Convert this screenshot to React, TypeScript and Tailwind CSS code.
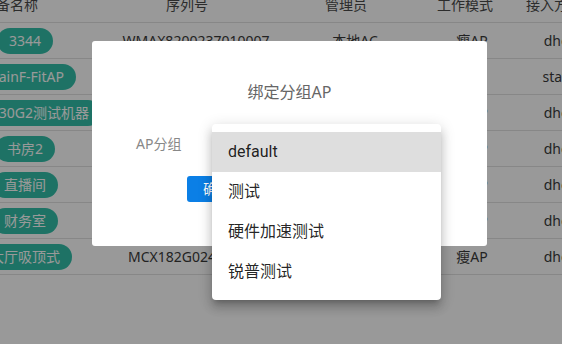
import React from "react";

const rows = [
  { name: "3344", sn: "WMAX8200237010007", admin: "本地AC", mode: "瘦AP", access: "dhcp" },
  { name: "MainF-FitAP", sn: "WMAX8200237010012", admin: "本地AC", mode: "-", access: "static" },
  { name: "WAX830G2测试机器", sn: "AX830G22100300218", admin: "本地AC", mode: "瘦AP", access: "dhcp" },
  { name: "书房2", sn: "MCX182G024000156", admin: "本地AC", mode: "瘦AP", access: "dhcp" },
  { name: "直播间", sn: "MCX182G024000172", admin: "本地AC", mode: "瘦AP", access: "dhcp" },
  { name: "财务室", sn: "MCX182G024000189", admin: "本地AC", mode: "瘦AP", access: "dhcp" },
  { name: "大厅吸顶式", sn: "MCX182G024000193", admin: "本地AC", mode: "瘦AP", access: "dhcp" },
];

const groups = ["default", "测试", "硬件加速测试", "锐普测试"];

const font = { fontFamily: '"Noto Sans", "Noto Sans CJK SC", sans-serif' };

export default function App() {
  return (
    <div className="relative w-[562px] h-[344px] overflow-hidden bg-white" style={font}>
      {/* ── device table (scrolled) ── */}
      <div className="-mt-[13px] -ml-[50px] w-[644px] text-[14px] text-[#3a3a3a]">
        <div className="flex h-[36px] items-center border-b border-[#e2e2e2] text-[#4a4a4a]">
          <div className="w-[150px] text-center pr-[30px]">设备名称</div>
          <div className="w-[192px] text-center pr-[18px]">序列号</div>
          <div className="w-[126px] text-center pr-[18px]">管理员</div>
          <div className="w-[108px] text-center pr-[14px]">工作模式</div>
          <div className="w-[68px] text-center pr-[12px] whitespace-nowrap">接入方式</div>
        </div>
        {rows.map((r) => (
          <div key={r.name} className="flex h-[36px] items-center border-b border-[#e2e2e2]">
            <div className="w-[150px] flex justify-center">
              <span className="h-[26px] px-3 rounded-full bg-[#33bfa9] text-white leading-[26px] whitespace-nowrap">
                {r.name}
              </span>
            </div>
            <div className="w-[192px] text-center whitespace-nowrap">{r.sn}</div>
            <div className="w-[126px] text-center">{r.admin}</div>
            <div className="w-[108px] text-center">{r.mode}</div>
            <div className="w-[68px] text-center">{r.access}</div>
          </div>
        ))}
      </div>

      {/* ── backdrop ── */}
      <div className="absolute inset-0 bg-black/40" />

      {/* ── bind group dialog ── */}
      <div className="absolute left-[92px] top-[41px] w-[395px] h-[205px] bg-white rounded-[3px] pt-[40px]">
        <div className="text-center text-[16px] leading-[22px] text-[#666]">绑定分组AP</div>
        <div className="flex items-center mt-[26px] pl-[44px] h-[40px]">
          <span className="w-[76px] text-[14px] text-[#888] -mt-[12px]">AP分组</span>
          <div className="w-[229px] h-[36px] border border-[#ccc] rounded-[4px]" />
        </div>
        <div className="flex gap-3 mt-[7px] pl-[95px]">
          <button className="h-[26px] px-4 rounded-[3px] bg-[#0b7fe6] text-white text-[14px] leading-[26px]">
            确定
          </button>
          <button className="h-[26px] px-4 rounded-[3px] border border-[#ccc] text-[#666] text-[14px]">
            取消
          </button>
        </div>
      </div>

      {/* ── select menu ── */}
      <div
        className="absolute left-[212px] top-[124px] w-[229px] bg-white rounded-[4px] py-2 shadow-[0_5px_5px_-3px_rgba(0,0,0,0.2),0_8px_10px_1px_rgba(0,0,0,0.14),0_3px_14px_2px_rgba(0,0,0,0.12)]"
        style={{ fontFamily: 'Roboto, "Noto Sans CJK SC", sans-serif' }}
      >
        {groups.map((g, i) => (
          <div
            key={g}
            className={`h-[40px] px-4 flex items-center text-[16px] text-black/[0.87] ${i === 0 ? "bg-[#dedede]" : ""}`}
          >
            {g}
          </div>
        ))}
      </div>
    </div>
  );
}
